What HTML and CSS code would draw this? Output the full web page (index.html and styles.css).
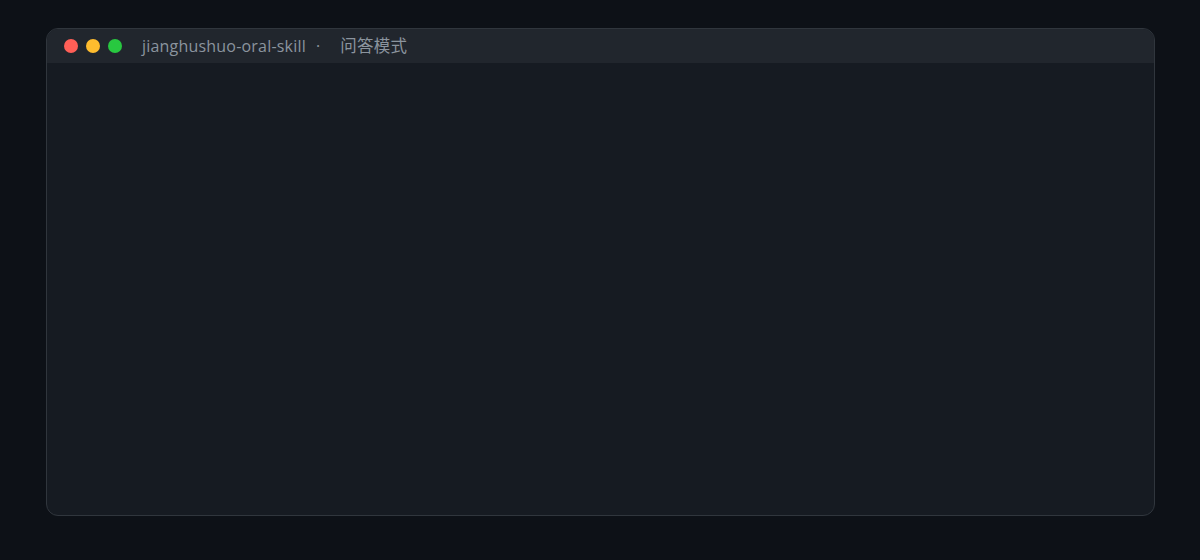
FILE: index.html
```html
<!DOCTYPE html>
<html lang="zh-CN">
<head>
    <meta charset="UTF-8">
    <title>jianghushuo-oral-skill</title>
    <link rel="stylesheet" href="styles.css">
</head>
<body>
    <div class="terminal">
        <div class="title-bar">
            <div class="dots">
                <span class="dot red"></span>
                <span class="dot yellow"></span>
                <span class="dot green"></span>
            </div>
            <div class="title">jianghushuo-oral-skill<span class="sep">·</span><span class="mode">问答模式</span></div>
        </div>
        <div class="term-body"></div>
    </div>
</body>
</html>
```

FILE: styles.css
```css
* {
    margin: 0;
    padding: 0;
    box-sizing: border-box;
}
body {
    background-color: #0d1117;
    padding: 28px 45px 0 46px;
    height: 560px;
    font-family: "Open Sans", "Noto Sans CJK SC", sans-serif;
}
.terminal {
    width: 1109px;
    height: 488px;
    background-color: #161b22;
    border: 1px solid #30363d;
    border-radius: 12px;
    overflow: hidden;
    display: flex;
    flex-direction: column;
}
.title-bar {
    height: 34px;
    background-color: #21262d;
    display: flex;
    align-items: center;
    padding-left: 17px;
    flex-shrink: 0;
}
.dots {
    display: flex;
    gap: 8px;
}
.dot {
    width: 14px;
    height: 14px;
    border-radius: 50%;
    display: block;
}
.red { background-color: #ff5f57; }
.yellow { background-color: #febc2e; }
.green { background-color: #28c840; }
.title {
    margin-left: 20px;
    margin-top: -2px;
    color: #8b949e;
    font-size: 16px;
    letter-spacing: 0.2px;
}
.sep {
    margin: 0 20px 0 10px;
}
.mode {
    font-size: 16.5px;
}
.term-body {
    flex: 1;
}
```
